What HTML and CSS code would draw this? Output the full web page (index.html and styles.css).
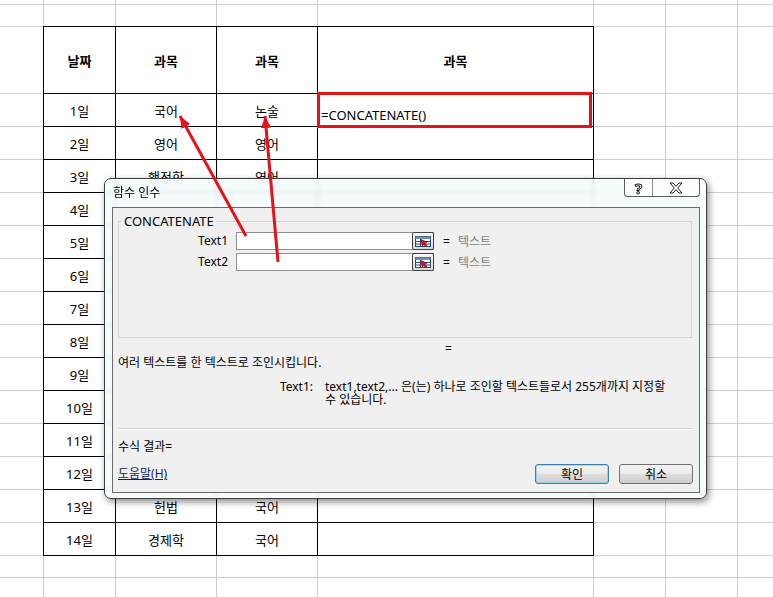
FILE: index.html
```html
<!DOCTYPE html>
<html lang="ko">
<head>
  <meta charset="UTF-8">
  <title>함수 인수</title>
  <link rel="stylesheet" href="styles.css">
</head>
<body>

  <!-- 시트 -->
  <div class="sheet">
    <table class="data">
      <colgroup>
        <col class="c-date">
        <col class="c-sub">
        <col class="c-sub">
        <col class="c-res">
      </colgroup>
      <tr class="head"><th>날짜</th><th>과목</th><th>과목</th><th>과목</th></tr>
      <tr><td>1일</td><td>국어</td><td>논술</td><td class="formula">=CONCATENATE()</td></tr>
      <tr><td>2일</td><td>영어</td><td>영어</td><td></td></tr>
      <tr><td>3일</td><td>행정학</td><td>영어</td><td></td></tr>
      <tr><td>4일</td><td></td><td></td><td></td></tr>
      <tr><td>5일</td><td></td><td></td><td></td></tr>
      <tr><td>6일</td><td></td><td></td><td></td></tr>
      <tr><td>7일</td><td></td><td></td><td></td></tr>
      <tr><td>8일</td><td></td><td></td><td></td></tr>
      <tr><td>9일</td><td></td><td></td><td></td></tr>
      <tr><td>10일</td><td></td><td></td><td></td></tr>
      <tr><td>11일</td><td></td><td></td><td></td></tr>
      <tr><td>12일</td><td></td><td></td><td></td></tr>
      <tr><td>13일</td><td>헌법</td><td>국어</td><td></td></tr>
      <tr><td>14일</td><td>경제학</td><td>국어</td><td></td></tr>
    </table>
  </div>

  <!-- 함수 인수 대화상자 -->
  <div class="dialog">
    <div class="titlebar">
      <div class="title">함수 인수</div>
      <div class="win-btns">
        <span class="win-help">?</span>
        <span class="win-close">
          <svg width="14" height="12" viewBox="0 0 14 12">
            <polygon points="1,1 4.2,1 7,4.3 9.8,1 13,1 8.7,6 13,11 9.8,11 7,7.7 4.2,11 1,11 5.3,6" fill="#fff" stroke="#1c1c1c" stroke-width="1" stroke-linejoin="round"/>
          </svg>
        </span>
      </div>
    </div>

    <div class="panel">
      <fieldset class="group">
        <legend>CONCATENATE</legend>
        <div class="arg">
          <label>Text1</label>
          <div class="arg-box">
            <span class="arg-field"></span>
            <span class="pick">
              <svg width="18" height="13" viewBox="0 0 18 13">
                <rect x="1.5" y="1.5" width="15" height="10" fill="#fff" stroke="#2c4a78"/>
                <rect x="1.5" y="1.5" width="15" height="2.5" fill="#6f8fbf"/>
                <path d="M2 6.5h14M2 9h14M6.5 4v7.5" stroke="#2c4a78" stroke-width="1"/>
                <path d="M7 4.5l6 2.6-2.4 0.9 2.2 2.3-1.2 1.1-2.2-2.3-0.9 2.4z" fill="#d8141c" stroke="#6a0000" stroke-width="0.6"/>
              </svg>
            </span>
          </div>
          <span class="eq">=</span>
          <span class="arg-type">텍스트</span>
        </div>
        <div class="arg">
          <label>Text2</label>
          <div class="arg-box">
            <span class="arg-field"></span>
            <span class="pick">
              <svg width="18" height="13" viewBox="0 0 18 13">
                <rect x="1.5" y="1.5" width="15" height="10" fill="#fff" stroke="#2c4a78"/>
                <rect x="1.5" y="1.5" width="15" height="2.5" fill="#6f8fbf"/>
                <path d="M2 6.5h14M2 9h14M6.5 4v7.5" stroke="#2c4a78" stroke-width="1"/>
                <path d="M7 4.5l6 2.6-2.4 0.9 2.2 2.3-1.2 1.1-2.2-2.3-0.9 2.4z" fill="#d8141c" stroke="#6a0000" stroke-width="0.6"/>
              </svg>
            </span>
          </div>
          <span class="eq">=</span>
          <span class="arg-type">텍스트</span>
        </div>
      </fieldset>

      <div class="result-eq">=</div>
      <div class="desc">여러 텍스트를 한 텍스트로 조인시킵니다.</div>
      <div class="arg-help">
        <span class="help-name">Text1:</span>
        <span class="help-text">text1,text2,... 은(는) 하나로 조인할 텍스트들로서 255개까지 지정할<br>수 있습니다.</span>
      </div>

      <div class="sep"></div>
      <div class="formula-result">수식 결과=</div>

      <div class="footer">
        <a href="#" class="help-link">도움말(H)</a>
        <div class="buttons">
          <button class="btn default">확인</button>
          <button class="btn">취소</button>
        </div>
      </div>
    </div>
  </div>

  <!-- 화살표 -->
  <svg class="arrows" width="773" height="597">
    <defs>
      <marker id="head" markerUnits="userSpaceOnUse" markerWidth="12" markerHeight="10" refX="12" refY="5" orient="auto">
        <path d="M0,0 L12,5 L0,10 z" fill="#e3121b"/>
      </marker>
    </defs>
    <line x1="246" y1="236" x2="180" y2="116" stroke="#e3121b" stroke-width="3" marker-end="url(#head)"/>
    <line x1="278" y1="262" x2="265" y2="116" stroke="#e3121b" stroke-width="3" marker-end="url(#head)"/>
  </svg>

</body>
</html>
```

FILE: styles.css
```css
* {
  margin: 0;
  padding: 0;
  box-sizing: border-box;
}

body {
  width: 773px;
  height: 597px;
  overflow: hidden;
  position: relative;
  background: #fff;
  color: #000;
  font-family: "Noto Sans", "Noto Sans CJK KR", sans-serif;
}

/* 시트 눈금선 */
.sheet {
  --line: linear-gradient(#cfcfcf, #cfcfcf);
  height: 597px;
  padding-top: 26px;
  background-color: #fff;
  background-image:
    var(--line), var(--line), var(--line), var(--line), var(--line), var(--line), var(--line),
    var(--line), var(--line), var(--line), var(--line),
    repeating-linear-gradient(to bottom, transparent 0 32px, #cfcfcf 32px 33px);
  background-size:
    1px 100%, 1px 100%, 1px 100%, 1px 100%, 1px 100%, 1px 100%, 1px 100%,
    100% 1px, 100% 1px, 100% 1px, 100% 1px,
    100% 462px;
  background-position:
    43px 0, 115px 0, 216px 0, 317px 0, 593px 0, 665px 0, 737px 0,
    0 4px, 0 26px, 0 93px, 0 577px,
    0 94px;
  background-repeat: no-repeat;
}

.data {
  border-collapse: separate;
  border-spacing: 0;
  table-layout: fixed;
  width: 551px;
  margin-left: 43px;
  border-top: 1px solid #000;
  border-left: 1px solid #000;
  background: #fff;
  font-size: 13px;
}

.c-date { width: 72px; }
.c-sub { width: 101px; }
.c-res { width: 276px; }

.data tr { height: 33px; }
.data tr.head { height: 67px; }

.data th,
.data td {
  border-right: 1px solid #000;
  border-bottom: 1px solid #000;
  text-align: center;
  vertical-align: middle;
  font-weight: normal;
}

.data th {
  font-weight: bold;
}

.data td.formula {
  text-align: left;
  vertical-align: bottom;
  padding: 0 0 2px 3px;
  position: relative;
}

.data td.formula::after {
  content: "";
  position: absolute;
  left: -1px;
  top: -2px;
  right: 1px;
  bottom: -2px;
  border: 3px solid #e3121b;
}

/* 대화상자 */
.dialog {
  position: absolute;
  left: 104px;
  top: 178px;
  width: 603px;
  height: 321px;
  z-index: 1;
  display: flex;
  flex-direction: column;
  border: 1px solid #3b3b3b;
  border-radius: 7px;
  background: rgba(244, 250, 253, 0.86);
  backdrop-filter: blur(2px);
  box-shadow: 2px 3px 7px rgba(0, 0, 0, 0.45), inset 0 0 0 1px rgba(255, 255, 255, 0.9);
  font-size: 12px;
}

.titlebar {
  height: 28px;
  display: flex;
  justify-content: space-between;
  align-items: flex-start;
  padding: 0 6px 0 8px;
}

.title {
  padding-top: 7px;
  line-height: 14px;
}

.win-btns {
  display: flex;
  height: 18px;
  border: 1px solid #5e5e5e;
  border-top: none;
  border-radius: 0 0 4px 4px;
  background: rgba(255, 255, 255, 0.6);
}

.win-help {
  width: 28px;
  border-right: 1px solid #8c8c8c;
  display: flex;
  align-items: center;
  justify-content: center;
  font-size: 15px;
  font-weight: bold;
  color: #fff;
  -webkit-text-stroke: 1px #1c1c1c;
}

.win-close {
  width: 46px;
  display: flex;
  align-items: center;
  justify-content: center;
}

.panel {
  flex: 1;
  margin: 0 6px 5px 7px;
  padding: 0 6px 0 5px;
  display: flex;
  flex-direction: column;
  border: 1px solid #6b6b6b;
  background: #f0f0f0;
}

.group {
  margin: 6px 1px 0 0;
  height: 124px;
  min-width: 0;
  padding: 4px 0 0;
  border: 1px solid #d3d3d3;
}

.group legend {
  margin-left: 3px;
  padding: 0 2px;
  font-size: 13px;
  line-height: 14px;
}

.arg {
  display: flex;
  align-items: center;
  height: 18px;
  margin-bottom: 3px;
}

.arg label {
  width: 109px;
  text-align: right;
  line-height: 14px;
}

.arg-box {
  width: 198px;
  height: 18px;
  margin-left: 8px;
  display: flex;
  border: 1px solid #8f8f8f;
  background: #fff;
}

.arg-field {
  flex: 1;
}

.pick {
  width: 22px;
  height: 18px;
  margin: -1px -1px -1px 0;
  display: flex;
  align-items: center;
  justify-content: center;
  border: 1px solid #404040;
  border-radius: 2px;
  background: linear-gradient(#fbfbfb, #dadada);
}

.eq {
  margin-left: 9px;
}

.arg-type {
  margin-left: 8px;
  color: #7f7f7f;
}

.result-eq {
  margin-top: 4px;
  padding-left: 327px;
  line-height: 14px;
}

.desc {
  line-height: 14px;
}

.arg-help {
  margin-top: 10px;
  display: grid;
  grid-template-columns: 195px 1fr;
  column-gap: 12px;
  line-height: 13px;
  white-space: nowrap;
}

.help-name {
  text-align: right;
}

.sep {
  margin-top: 22px;
  border-top: 1px solid #d5d5d5;
  border-bottom: 1px solid #fff;
}

.formula-result {
  margin-top: 10px;
  line-height: 14px;
}

.footer {
  margin-top: 10px;
  display: flex;
  justify-content: space-between;
  align-items: center;
}

.help-link {
  color: #0c1f6e;
  text-decoration: underline;
  line-height: 14px;
}

.buttons {
  display: flex;
  gap: 10px;
}

.btn {
  width: 74px;
  height: 20px;
  border: 1px solid #707070;
  border-radius: 3px;
  background: linear-gradient(#f2f2f2 0%, #ebebeb 50%, #dddddd 50%, #cfcfcf 100%);
  font-family: inherit;
  font-size: 12px;
  color: #000;
}

.btn.default {
  border-color: #3c7fb1;
  box-shadow: inset 0 0 0 1px rgba(130, 205, 240, 0.7);
}

/* 화살표 */
.arrows {
  position: absolute;
  left: 0;
  top: 0;
  z-index: 2;
  pointer-events: none;
}
```
